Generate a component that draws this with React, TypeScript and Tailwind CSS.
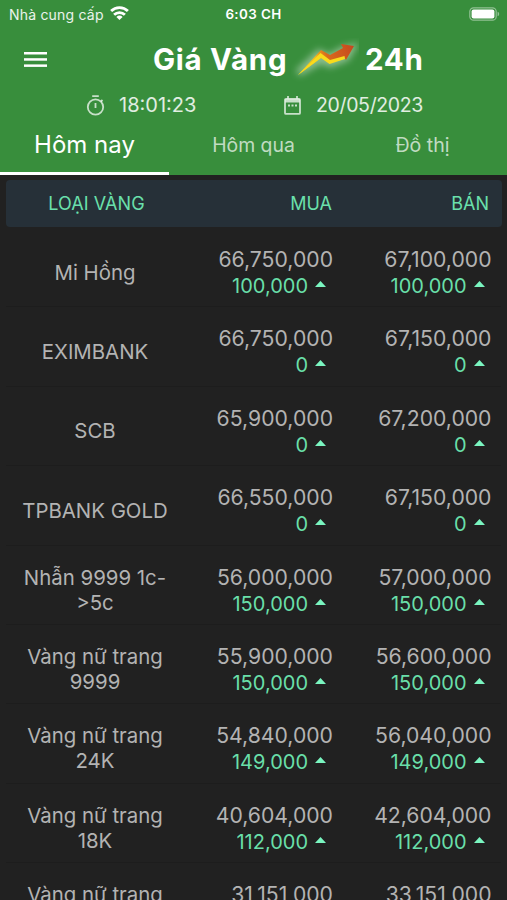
type GoldRow = {
  name: string[];
  buy: string;
  buyChange?: string;
  sell: string;
  sellChange?: string;
};

const rows: GoldRow[] = [
  { name: ["Mi Hồng"], buy: "66,750,000", buyChange: "100,000", sell: "67,100,000", sellChange: "100,000" },
  { name: ["EXIMBANK"], buy: "66,750,000", buyChange: "0", sell: "67,150,000", sellChange: "0" },
  { name: ["SCB"], buy: "65,900,000", buyChange: "0", sell: "67,200,000", sellChange: "0" },
  { name: ["TPBANK GOLD"], buy: "66,550,000", buyChange: "0", sell: "67,150,000", sellChange: "0" },
  { name: ["Nhẫn 9999 1c-", ">5c"], buy: "56,000,000", buyChange: "150,000", sell: "57,000,000", sellChange: "150,000" },
  { name: ["Vàng nữ trang", "9999"], buy: "55,900,000", buyChange: "150,000", sell: "56,600,000", sellChange: "150,000" },
  { name: ["Vàng nữ trang", "24K"], buy: "54,840,000", buyChange: "149,000", sell: "56,040,000", sellChange: "149,000" },
  { name: ["Vàng nữ trang", "18K"], buy: "40,604,000", buyChange: "112,000", sell: "42,604,000", sellChange: "112,000" },
  { name: ["Vàng nữ trang"], buy: "31,151,000", sell: "33,151,000" },
];

function StatusBar() {
  return (
    <div className="grid h-[28px] grid-cols-3 items-center px-[9px] text-[13px]">
      <div className="flex items-center gap-[6px] whitespace-nowrap">
        <span className="text-[14px] tracking-[0.2px] text-white/90">Nhà cung cấp</span>
        <svg className="mb-[2px] h-[14px] w-[19px] shrink-0" viewBox="0 0 19 14" fill="none" stroke="white" strokeWidth="2.8">
          <path d="M1.1 5.1a12 12 0 0 1 16.8 0" />
          <path d="M4.1 8.8a7.7 7.7 0 0 1 10.8 0" />
          <path d="M9.5 14 6.4 10.9a4.5 4.5 0 0 1 6.2 0z" fill="white" stroke="none" />
        </svg>
      </div>
      <span className="text-center text-[13.4px] font-semibold tracking-[0.4px] text-white">6:03 CH</span>
      <svg className="-mr-[2px] mb-[1px] h-[14px] w-[31px] justify-self-end" viewBox="0 0 31 14">
        <rect x="0.8" y="0.8" width="26.4" height="12.4" rx="3.8" fill="none" stroke="white" strokeOpacity="0.45" strokeWidth="1.2" />
        <rect x="2.6" y="2.4" width="22.8" height="9.2" rx="2" fill="white" />
        <path d="M28.6 4.8v4.4a2.3 2.3 0 0 0 0-4.4z" fill="white" fillOpacity="0.45" />
      </svg>
    </div>
  );
}

function TrendArrow() {
  return (
    <svg className="h-[44px] w-[68px]" viewBox="0 0 68 44">
      <defs>
        <linearGradient id="shaft" x1="5" y1="36" x2="64" y2="8" gradientUnits="userSpaceOnUse">
          <stop offset="0" stopColor="#f2e021" />
          <stop offset="0.38" stopColor="#f4b81b" />
          <stop offset="0.55" stopColor="#d96a1c" />
          <stop offset="1" stopColor="#c4461f" />
        </linearGradient>
        <filter id="glow" x="-30%" y="-40%" width="160%" height="180%">
          <feGaussianBlur stdDeviation="3.5" />
        </filter>
      </defs>
      <path d="M7 35 28 15l10 5 14-8 9-2-6 10-16 6-9-4z" fill="white" stroke="white" strokeWidth="7" opacity="0.42" filter="url(#glow)" />
      <path d="M7 37 30 12l9 5 13-7-2-4L63 8l-8 14-2-3-14 6-9-5z" fill="url(#shaft)" />
      <path d="M7 37 29.5 15l9.5 7 14.500-4 .5 3-15.500 5L30 20z" fill="#f9db1b" />
    </svg>
  );
}

function Header() {
  return (
    <header className="h-[175px] bg-[#388e3c]">
      <StatusBar />

      {/* Title bar */}
      <div className="flex h-[63px] items-center">
        <svg className="ml-[24px] h-[15px] w-[23px]" viewBox="0 0 23 15" fill="white">
          <rect width="23" height="2.5" />
          <rect y="6.2" width="23" height="2.5" />
          <rect y="12.4" width="23" height="2.5" />
        </svg>
        <h1 className="ml-[106px] flex items-center whitespace-nowrap text-[29.5px] font-bold tracking-[0.7px] text-white">
          <span className="w-[138px]">Giá Vàng</span>
          <TrendArrow />
          <span className="ml-[6px]">24h</span>
        </h1>
      </div>

      {/* Time and date */}
      <div className="flex h-[28px] items-center text-[20px] text-white/85">
        <svg className="ml-[86px] h-[21px] w-[19px]" viewBox="0 0 19 21" fill="none" stroke="currentColor" strokeOpacity="0.85" strokeWidth="1.8">
          <circle cx="9.5" cy="12" r="7.7" />
          <path d="M6.2 1.2h6.6M9.5 8v5M15 6.5l1.5-1.5" />
        </svg>
        <span className="ml-[14px] w-[78px] whitespace-nowrap">18:01:23</span>
        <svg className="ml-[87px] h-[19px] w-[17px] opacity-85" viewBox="0 0 17 19" fill="none" stroke="currentColor" strokeWidth="1.8">
          <path d="M2 2.9h13a1 1 0 0 1 1 1v13a1 1 0 0 1-1 1H2a1 1 0 0 1-1-1v-13a1 1 0 0 1 1-1z" />
          <path d="M1 3h15v3.500H1z" fill="currentColor" stroke="none" />
          <path d="M4 0v3M13 0v3M4 9.500h2M7.500 9.500h2M11 9.500h2" />
        </svg>
        <span className="ml-[15px] whitespace-nowrap pt-[1px] text-[19.5px] tracking-[-0.35px]">20/05/2023</span>
      </div>

      {/* Tabs */}
      <nav className="grid h-[56px] grid-cols-3 text-center">
        <div className="border-b-[3px] border-white pt-[8px] text-[24px] leading-[36px] text-white">
          <span>Hôm nay</span>
        </div>
        <div className="pt-[8px] text-[19.4px] leading-[36px] text-white/70">
          <span>Hôm qua</span>
        </div>
        <div className="pt-[8px] text-[19.6px] leading-[36px] text-white/70">
          <span>Đồ thị</span>
        </div>
      </nav>
    </header>
  );
}

function Price({ value, change }: { value: string; change?: string }) {
  return (
    <div className="text-right">
      <div className="text-[21.2px] leading-[26px] text-[#b3b3b3]">{value}</div>
      <div className="mt-px flex h-[26px] items-center justify-end pr-[7px] text-[20px] leading-[26px] text-[#69dfa9]">
        {change && (
          <>
            <span>{change}</span>
            <svg className="mb-[4px] ml-[7px] h-[6px] w-[11px]" viewBox="0 0 11 6" fill="#7af5c0">
              <path d="M5.5 0 11 6H0z" />
            </svg>
          </>
        )}
      </div>
    </div>
  );
}

export default function App() {
  return (
    <div className="h-[900px] w-[507px] overflow-hidden bg-[#212121] font-['Inter',sans-serif]">
      <Header />

      {/* Column titles */}
      <div className="ml-[6px] mr-[5px] mt-[5px] grid h-[47px] grid-cols-[181px_145px_157px] items-center rounded-[4px] bg-[#263038] text-[18px] text-[#6ae0ac]">
        <span className="text-center tracking-[0.1px]">LOẠI VÀNG</span>
        <span className="text-right">MUA</span>
        <span className="text-right">BÁN</span>
      </div>

      {/* Price list */}
      <div className="mx-[6px] mt-[1px]">
        {rows.map((row, i) => (
          <div
            key={i}
            className="grid h-[79.4px] grid-cols-[178px_149px_158.5px] items-start border-b border-[#1d1d1d] pt-[18px]"
          >
            <div className="flex min-h-[52px] flex-col justify-center text-center text-[20.4px] leading-[25px] text-[#b3b3b3]">
              {row.name.map((line) => (
                <div key={line} className="whitespace-nowrap">{line}</div>
              ))}
              {i === rows.length - 1 && <div className="h-[25px]" />}
            </div>
            <Price value={row.buy} change={row.buyChange} />
            <Price value={row.sell} change={row.sellChange} />
          </div>
        ))}
      </div>
    </div>
  );
}
